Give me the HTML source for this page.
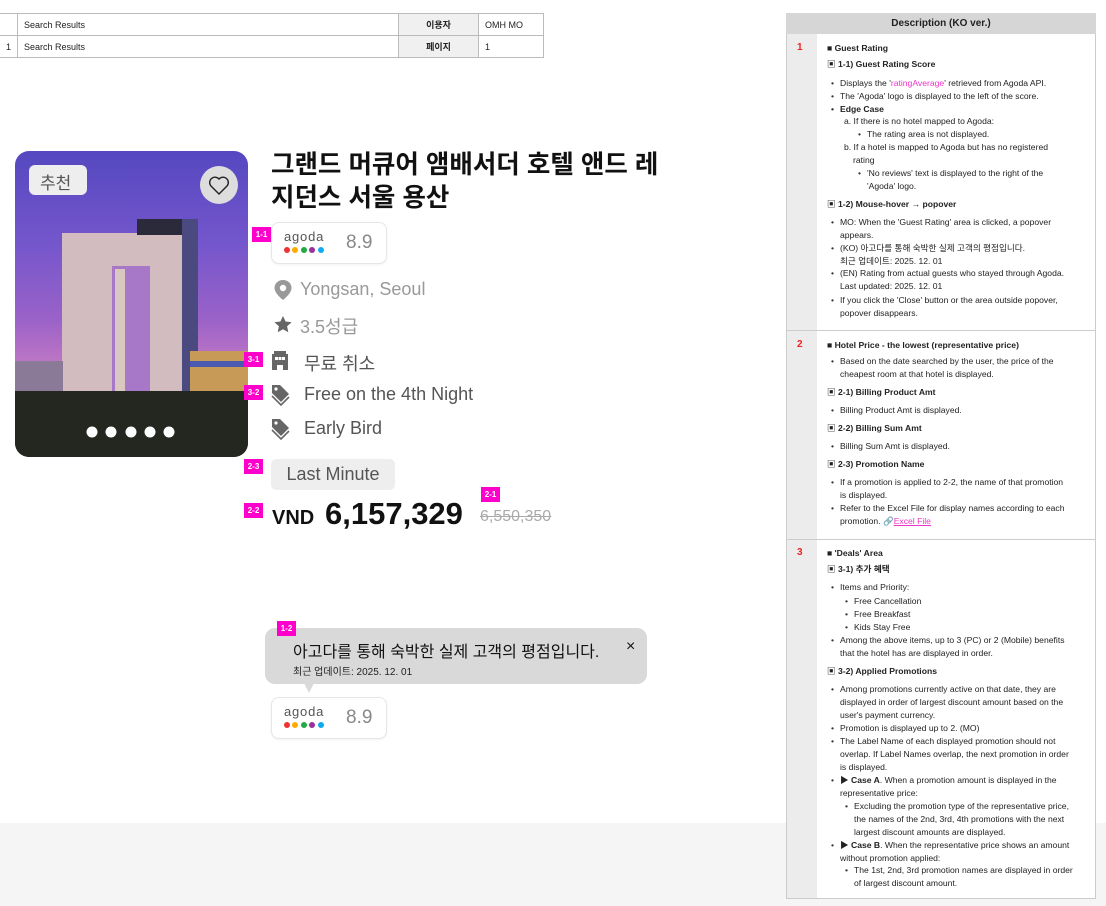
<!DOCTYPE html>
<html><head><meta charset="utf-8"><style>
*{margin:0;padding:0;box-sizing:border-box}
body{width:1106px;height:906px;position:relative;overflow:hidden;background:#fff;font-family:"Liberation Sans","Noto Sans CJK KR",sans-serif;color:#222}
.a{position:absolute;white-space:nowrap}
.bg{position:absolute;left:0;top:823px;width:1106px;height:83px;background:#f5f5f5}
table{position:absolute;left:-1px;top:13px;border-collapse:collapse;font-size:9px}
td{border:1px solid #bbb;height:22px;padding:0 6px}
td.h{background:#f0f0f0;font-weight:bold;text-align:center}
.badge{position:absolute;background:#f0c;color:#fff;font-size:8px;font-weight:bold;width:19px;height:15px;line-height:15px;text-align:center}
.ag{position:absolute;width:116px;height:42px;border:1px solid #e6e6e6;border-radius:8px;background:#fff;box-shadow:0 1px 2px rgba(0,0,0,.06)}
.ag .t{position:absolute;left:12px;top:6px;font-size:13px;color:#555;letter-spacing:.8px;font-weight:300}
.ag .d{position:absolute;top:24px;width:6px;height:6px;border-radius:50%}
.ag .s{position:absolute;left:74px;top:9px;font-size:19px;color:#888}
.inf{position:absolute;font-size:18px;color:#999}
.dl{position:absolute;font-size:18px;color:#555}
.panel{position:absolute;left:786px;top:13px;width:310px;height:886px;border:1px solid #ccc;background:#fff}
.ph{position:absolute;left:786px;top:13px;width:310px;height:21px;background:#d6d6d6;font-size:10px;font-weight:bold;text-align:center;line-height:21px}
.nc{position:absolute;left:787px;top:34px;width:30px;height:864px;background:#ececec}
.rl{position:absolute;left:787px;width:308px;height:1px;background:#ccc}
.n{position:absolute;left:797px;color:#e22;font-weight:bold;font-size:10px}
.p{position:absolute;font-size:8.6px;line-height:13px;white-space:nowrap;color:#222}
.b{font-weight:bold}
.bu:before{content:"•";position:absolute;left:-9px;color:#333}
</style></head><body>
<div class="bg"></div>
<table><tr><td style="width:16px"></td><td style="width:381px">Search Results</td><td class="h" style="width:80px">이용자</td><td style="width:65px">OMH MO</td></tr>
<tr><td>1</td><td>Search Results</td><td class="h">페이지</td><td>1</td></tr></table>

<!-- image card -->
<div style="position:absolute;left:15px;top:151px;width:233px;height:306px;border-radius:14px;overflow:hidden;background:linear-gradient(180deg,#5548c0 0%,#7456cc 30%,#9a62c8 55%,#c47ac4 72%,#8a5a90 80%,#2a2a28 88%,#1e221c 100%)">
<svg width="233" height="306" style="position:absolute;left:0;top:0">
<rect x="47" y="82" width="135" height="168" fill="#d2bcc0"/>
<rect x="122" y="68" width="60" height="16" fill="#2a2a3a"/>
<rect x="167" y="68" width="16" height="180" fill="#4a4a80"/>
<rect x="97" y="115" width="38" height="135" fill="#a878c8"/>
<rect x="100" y="118" width="10" height="132" fill="#d8c8c0"/>
<rect x="175" y="200" width="58" height="50" fill="#c89a58"/>
<rect x="175" y="210" width="58" height="6" fill="#4a5ab0"/>
<rect x="0" y="210" width="48" height="40" fill="#8a7a98"/>
<rect x="0" y="240" width="233" height="66" fill="#24271f"/>
<g fill="#fff"><circle cx="77" cy="281" r="5.5"/><circle cx="96" cy="281" r="5.5"/><circle cx="116" cy="281" r="5.5"/><circle cx="135" cy="281" r="5.5"/><circle cx="154" cy="281" r="5.5"/></g>
<rect x="14" y="14" width="58" height="30" rx="6" fill="#eee"/>
<circle cx="204" cy="34" r="19" fill="#ddd"/>
<path d="M204 43 L196 35 A4.5 4.5 0 0 1 204 28 A4.5 4.5 0 0 1 212 35 Z" fill="none" stroke="#222" stroke-width="1.4"/>
</svg>
<div class="a" style="left:25px;top:18px;font-size:17px;color:#555">추천</div>
</div>

<div class="a" style="left:271px;top:149px;font-size:25.5px;font-weight:bold;line-height:33px;color:#111">그랜드 머큐어 앰배서더 호텔 앤드 레<br>지던스 서울 용산</div>

<div class="badge" style="left:252px;top:227px">1-1</div>
<div class="ag" style="left:271px;top:222px"><div class="t">agoda</div>
<div class="d" style="left:12px;background:#e33"></div><div class="d" style="left:20px;background:#fa0"></div><div class="d" style="left:29px;background:#2a4"></div><div class="d" style="left:37px;background:#939"></div><div class="d" style="left:46px;background:#1ae"></div><div class="s">8.9</div></div>

<svg class="a" style="left:273px;top:279px" width="20" height="22"><path d="M10 1C5 1 1.5 4.5 1.5 9c0 5.5 8.5 12 8.5 12s8.5-6.5 8.5-12C18.5 4.5 15 1 10 1z" fill="#999"/><circle cx="10" cy="9" r="3.2" fill="#fff"/></svg>
<div class="inf" style="left:300px;top:279px">Yongsan, Seoul</div>
<svg class="a" style="left:273px;top:315px" width="20" height="18"><path d="M10 1l2.6 5.5 6 .7-4.5 4.1 1.2 6L10 14.3 4.7 17.3l1.2-6L1.4 7.2l6-.7z" fill="#666"/></svg>
<div class="inf" style="left:300px;top:313px">3.5성급</div>

<div class="badge" style="left:244px;top:352px">3-1</div>
<svg class="a" style="left:271px;top:351px" width="18" height="19"><path d="M1 3h16v16h-5v-5H6v5H1z M3 0h12v3H3z" fill="#666"/><g fill="#fff"><rect x="4" y="6" width="3" height="3"/><rect x="11" y="6" width="3" height="3"/><rect x="7.5" y="6" width="3" height="3"/></g></svg>
<div class="dl" style="left:304px;top:350px">무료 취소</div>
<div class="badge" style="left:244px;top:385px">3-2</div>
<svg class="a" style="left:271px;top:384px" width="20" height="22"><path d="M1 1h8l9 9-8 8-9-9z" fill="#666"/><circle cx="5" cy="5" r="1.6" fill="#fff"/><path d="M1 12l9 9 8-8" fill="none" stroke="#666" stroke-width="1.6"/></svg>
<div class="dl" style="left:304px;top:384px">Free on the 4th Night</div>
<svg class="a" style="left:271px;top:418px" width="20" height="22"><path d="M1 1h8l9 9-8 8-9-9z" fill="#666"/><circle cx="5" cy="5" r="1.6" fill="#fff"/><path d="M1 12l9 9 8-8" fill="none" stroke="#666" stroke-width="1.6"/></svg>
<div class="dl" style="left:304px;top:418px">Early Bird</div>

<div class="badge" style="left:244px;top:459px">2-3</div>
<div class="a" style="left:271px;top:459px;width:124px;height:31px;background:#eee;border-radius:5px;font-size:18px;color:#555;text-align:center;line-height:31px">Last Minute</div>
<div class="badge" style="left:244px;top:503px">2-2</div>
<div class="badge" style="left:481px;top:487px">2-1</div>
<div class="a" style="left:272px;top:507px;font-size:20px;font-weight:bold;color:#111">VND</div>
<div class="a" style="left:325px;top:496px;font-size:31px;font-weight:bold;color:#111">6,157,329</div>
<div class="a" style="left:480px;top:508px;font-size:16px;color:#aaa;text-decoration:line-through">6,550,350</div>

<div class="a" style="left:265px;top:628px;width:382px;height:56px;background:#d9d9d9;border-radius:10px"></div>
<div class="a" style="left:304px;top:683px;width:0;height:0;border-left:5px solid transparent;border-right:5px solid transparent;border-top:10px solid #d9d9d9"></div>
<div class="badge" style="left:277px;top:621px">1-2</div>
<div class="a" style="left:293px;top:638px;font-size:16px;color:#111">아고다를 통해 숙박한 실제 고객의 평점입니다.</div>
<div class="a" style="left:626px;top:638px;font-size:16px;color:#111">×</div>
<div class="a" style="left:293px;top:663px;font-size:10px;color:#222">최근 업데이트: 2025. 12. 01</div>
<div class="ag" style="left:271px;top:697px"><div class="t">agoda</div>
<div class="d" style="left:12px;background:#e33"></div><div class="d" style="left:20px;background:#fa0"></div><div class="d" style="left:29px;background:#2a4"></div><div class="d" style="left:37px;background:#939"></div><div class="d" style="left:46px;background:#1ae"></div><div class="s">8.9</div></div>

<!-- panel -->
<div class="panel"></div>
<div class="nc"></div>
<div class="ph">Description (KO ver.)</div>
<div class="rl" style="top:330px"></div>
<div class="rl" style="top:539px"></div>
<div class="n" style="top:42px">1</div>
<div class="n" style="top:339px">2</div>
<div class="n" style="top:547px">3</div>

<div class="p b" style="left:827px;top:42px">■ Guest Rating</div>
<div class="p b" style="left:827px;top:58px">▣ 1-1) Guest Rating Score</div>
<div class="p bu" style="left:840px;top:77px">Displays the '<span style="color:#e3c">ratingAverage</span>' retrieved from Agoda API.</div>
<div class="p bu" style="left:840px;top:90px">The 'Agoda' logo is displayed to the left of the score.</div>
<div class="p bu b" style="left:840px;top:103px">Edge Case</div>
<div class="p" style="left:844px;top:115px">a. If there is no hotel mapped to Agoda:</div>
<div class="p bu" style="left:867px;top:128px">The rating area is not displayed.</div>
<div class="p" style="left:844px;top:141px">b. If a hotel is mapped to Agoda but has no registered</div>
<div class="p" style="left:853px;top:154px">rating</div>
<div class="p bu" style="left:867px;top:167px">'No reviews' text is displayed to the right of the</div>
<div class="p" style="left:867px;top:180px">'Agoda' logo.</div>
<div class="p b" style="left:827px;top:198px">▣ 1-2) Mouse-hover → popover</div>
<div class="p bu" style="left:840px;top:216px">MO: When the 'Guest Rating' area is clicked, a popover</div>
<div class="p" style="left:840px;top:229px">appears.</div>
<div class="p bu" style="left:840px;top:242px">(KO) 아고다를 통해 숙박한 실제 고객의 평점입니다.</div>
<div class="p" style="left:840px;top:255px">최근 업데이트: 2025. 12. 01</div>
<div class="p bu" style="left:840px;top:267px">(EN) Rating from actual guests who stayed through Agoda.</div>
<div class="p" style="left:840px;top:280px">Last updated: 2025. 12. 01</div>
<div class="p bu" style="left:840px;top:294px">If you click the 'Close' button or the area outside popover,</div>
<div class="p" style="left:840px;top:307px">popover disappears.</div>

<div class="p b" style="left:827px;top:339px">■ Hotel Price - the lowest (representative price)</div>
<div class="p bu" style="left:840px;top:355px">Based on the date searched by the user, the price of the</div>
<div class="p" style="left:840px;top:368px">cheapest room at that hotel is displayed.</div>
<div class="p b" style="left:827px;top:386px">▣ 2-1) Billing Product Amt</div>
<div class="p bu" style="left:840px;top:404px">Billing Product Amt is displayed.</div>
<div class="p b" style="left:827px;top:422px">▣ 2-2) Billing Sum Amt</div>
<div class="p bu" style="left:840px;top:440px">Billing Sum Amt is displayed.</div>
<div class="p b" style="left:827px;top:458px">▣ 2-3) Promotion Name</div>
<div class="p bu" style="left:840px;top:476px">If a promotion is applied to 2-2, the name of that promotion</div>
<div class="p" style="left:840px;top:489px">is displayed.</div>
<div class="p bu" style="left:840px;top:502px">Refer to the Excel File for display names according to each</div>
<div class="p" style="left:840px;top:515px">promotion. 🔗<span style="color:#e3c;text-decoration:underline">Excel File</span></div>

<div class="p b" style="left:827px;top:547px">■ 'Deals' Area</div>
<div class="p b" style="left:827px;top:563px">▣ 3-1) 추가 혜택</div>
<div class="p bu" style="left:840px;top:581px">Items and Priority:</div>
<div class="p bu" style="left:854px;top:595px">Free Cancellation</div>
<div class="p bu" style="left:854px;top:608px">Free Breakfast</div>
<div class="p bu" style="left:854px;top:621px">Kids Stay Free</div>
<div class="p bu" style="left:840px;top:634px">Among the above items, up to 3 (PC) or 2 (Mobile) benefits</div>
<div class="p" style="left:840px;top:647px">that the hotel has are displayed in order.</div>
<div class="p b" style="left:827px;top:665px">▣ 3-2) Applied Promotions</div>
<div class="p bu" style="left:840px;top:683px">Among promotions currently active on that date, they are</div>
<div class="p" style="left:840px;top:696px">displayed in order of largest discount amount based on the</div>
<div class="p" style="left:840px;top:709px">user's payment currency.</div>
<div class="p bu" style="left:840px;top:722px">Promotion is displayed up to 2. (MO)</div>
<div class="p bu" style="left:840px;top:735px">The Label Name of each displayed promotion should not</div>
<div class="p" style="left:840px;top:748px">overlap. If Label Names overlap, the next promotion in order</div>
<div class="p" style="left:840px;top:761px">is displayed.</div>
<div class="p bu" style="left:840px;top:774px"><b>▶ Case A</b>. When a promotion amount is displayed in the</div>
<div class="p" style="left:840px;top:787px">representative price:</div>
<div class="p bu" style="left:854px;top:800px">Excluding the promotion type of the representative price,</div>
<div class="p" style="left:854px;top:813px">the names of the 2nd, 3rd, 4th promotions with the next</div>
<div class="p" style="left:854px;top:826px">largest discount amounts are displayed.</div>
<div class="p bu" style="left:840px;top:839px"><b>▶ Case B</b>. When the representative price shows an amount</div>
<div class="p" style="left:840px;top:852px">without promotion applied:</div>
<div class="p bu" style="left:854px;top:864px">The 1st, 2nd, 3rd promotion names are displayed in order</div>
<div class="p" style="left:854px;top:877px">of largest discount amount.</div>
</body></html>
